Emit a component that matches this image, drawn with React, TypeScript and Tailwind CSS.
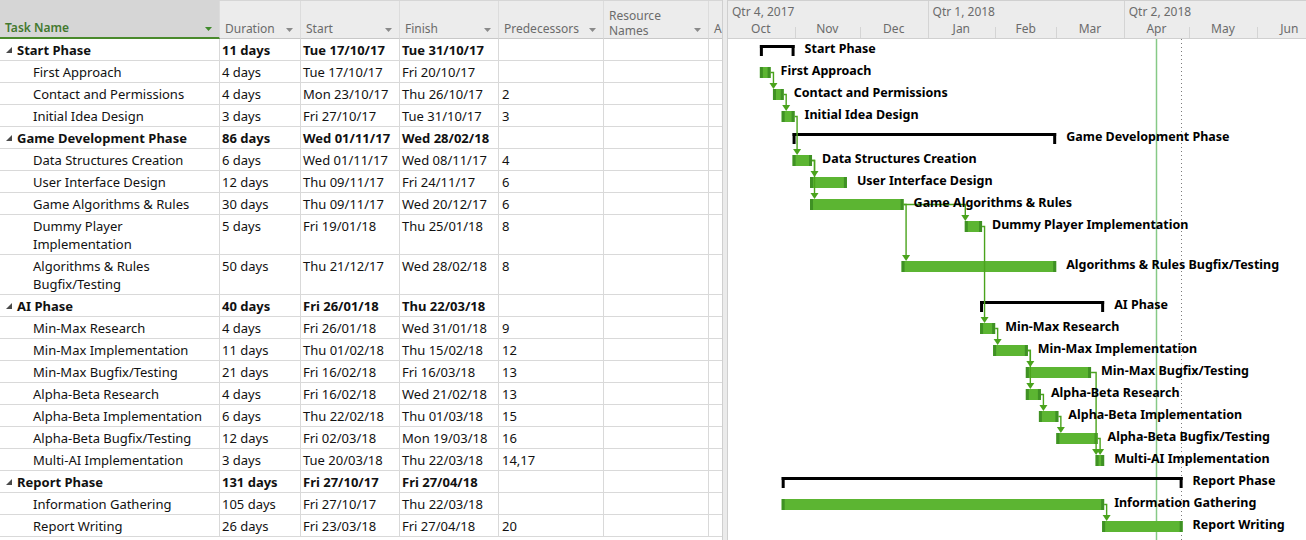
import React from 'react';

type Task = {
  name: string;
  dur: string;
  start: string;
  finish: string;
  pred: string;
  summary?: boolean;
  lines?: string[];
};

const tasks: Task[] = [
  { name: 'Start Phase', dur: '11 days', start: 'Tue 17/10/17', finish: 'Tue 31/10/17', pred: '', summary: true },
  { name: 'First Approach', dur: '4 days', start: 'Tue 17/10/17', finish: 'Fri 20/10/17', pred: '' },
  { name: 'Contact and Permissions', dur: '4 days', start: 'Mon 23/10/17', finish: 'Thu 26/10/17', pred: '2' },
  { name: 'Initial Idea Design', dur: '3 days', start: 'Fri 27/10/17', finish: 'Tue 31/10/17', pred: '3' },
  { name: 'Game Development Phase', dur: '86 days', start: 'Wed 01/11/17', finish: 'Wed 28/02/18', pred: '', summary: true },
  { name: 'Data Structures Creation', dur: '6 days', start: 'Wed 01/11/17', finish: 'Wed 08/11/17', pred: '4' },
  { name: 'User Interface Design', dur: '12 days', start: 'Thu 09/11/17', finish: 'Fri 24/11/17', pred: '6' },
  { name: 'Game Algorithms & Rules', dur: '30 days', start: 'Thu 09/11/17', finish: 'Wed 20/12/17', pred: '6' },
  { name: 'Dummy Player Implementation', lines: ['Dummy Player', 'Implementation'], dur: '5 days', start: 'Fri 19/01/18', finish: 'Thu 25/01/18', pred: '8' },
  { name: 'Algorithms & Rules Bugfix/Testing', lines: ['Algorithms & Rules', 'Bugfix/Testing'], dur: '50 days', start: 'Thu 21/12/17', finish: 'Wed 28/02/18', pred: '8' },
  { name: 'AI Phase', dur: '40 days', start: 'Fri 26/01/18', finish: 'Thu 22/03/18', pred: '', summary: true },
  { name: 'Min-Max Research', dur: '4 days', start: 'Fri 26/01/18', finish: 'Wed 31/01/18', pred: '9' },
  { name: 'Min-Max Implementation', dur: '11 days', start: 'Thu 01/02/18', finish: 'Thu 15/02/18', pred: '12' },
  { name: 'Min-Max Bugfix/Testing', dur: '21 days', start: 'Fri 16/02/18', finish: 'Fri 16/03/18', pred: '13' },
  { name: 'Alpha-Beta Research', dur: '4 days', start: 'Fri 16/02/18', finish: 'Wed 21/02/18', pred: '13' },
  { name: 'Alpha-Beta Implementation', dur: '6 days', start: 'Thu 22/02/18', finish: 'Thu 01/03/18', pred: '15' },
  { name: 'Alpha-Beta Bugfix/Testing', dur: '12 days', start: 'Fri 02/03/18', finish: 'Mon 19/03/18', pred: '16' },
  { name: 'Multi-AI Implementation', dur: '3 days', start: 'Tue 20/03/18', finish: 'Thu 22/03/18', pred: '14,17' },
  { name: 'Report Phase', dur: '131 days', start: 'Fri 27/10/17', finish: 'Fri 27/04/18', pred: '', summary: true },
  { name: 'Information Gathering', dur: '105 days', start: 'Fri 27/10/17', finish: 'Thu 22/03/18', pred: '' },
  { name: 'Report Writing', dur: '26 days', start: 'Fri 23/03/18', finish: 'Fri 27/04/18', pred: '20' },
];

// timescale: Oct 1 2017 sits one pixel left of the chart's edge
const PX = 2.18;
const X0 = -1;
const dayOf = (s: string) => {
  const [dd, mm, yy] = s.split(' ')[1].split('/').map(Number);
  return (Date.UTC(2000 + yy, mm - 1, dd) - Date.UTC(2017, 9, 1)) / 86400000;
};
const xAt = (d: number) => X0 + d * PX;

const rowH = tasks.map((t) => (t.lines ? 40 : 22));
const rowTop = rowH.map((_, i) => rowH.slice(0, i).reduce((a, b) => a + b, 0));

const bars = tasks.map((t, i) => {
  const x1 = xAt(dayOf(t.start)) - 2;
  const x2 = xAt(dayOf(t.finish) + 1);
  return { x1, x2, top: rowTop[i] + 6, mid: rowTop[i] + 11.5 };
});

const cols = [
  { key: 'name', label: 'Task Name', w: 'w-[220px]' },
  { key: 'dur', label: 'Duration', w: 'w-[81px]' },
  { key: 'start', label: 'Start', w: 'w-[99px]' },
  { key: 'finish', label: 'Finish', w: 'w-[99px]' },
  { key: 'pred', label: 'Predecessors', w: 'w-[105px]' },
  { key: 'res', label: 'Resource Names', w: 'w-[105px]' },
];

const Caret = ({ green }: { green?: boolean }) => (
  <svg width="7" height="4" viewBox="0 0 7 4" className="mb-[6px] shrink-0">
    <polygon points="0,0 7,0 3.5,4" fill={green ? '#3f8a2b' : '#8a8a8a'} />
  </svg>
);

const TableHeader = () => (
  <div className="flex h-[39px] border-t border-[#d6d6d6] text-[12px] text-[#6b6b6b]">
    {cols.map((c) => (
      <div
        key={c.key}
        className={`${c.w} flex shrink-0 items-end justify-between border-r border-[#dcdcdc] pl-[5px] pr-[7px] ${
          c.key === 'name'
            ? 'border-b-2 border-b-[#4a8a2c] bg-[#d6d6d6] font-semibold text-[#43792f]'
            : 'border-b border-b-[#c8c8c8] bg-[#ececec]'
        }`}
      >
        {c.key === 'res' ? (
          <span className="leading-[15px]">
            Resource
            <br />
            Names
          </span>
        ) : (
          <span className="leading-[18px]">{c.label}</span>
        )}
        <Caret green={c.key === 'name'} />
      </div>
    ))}
    <div className="flex w-[13px] shrink-0 items-end overflow-hidden border-b border-b-[#c8c8c8] bg-[#ececec] pl-[5px]">
      <span className="leading-[18px]">A</span>
    </div>
  </div>
);

const SummaryToggle = () => (
  <svg width="6" height="6" viewBox="0 0 6 6" className="mr-[5px] ml-[6px] mt-[6px] shrink-0">
    <polygon points="6,0 6,6 0,6" fill="#4a4a4a" />
  </svg>
);

const TableRow = ({ t }: { t: Task }) => {
  const h = t.lines ? 'h-[40px]' : 'h-[22px]';
  const weight = t.summary ? 'font-bold' : '';
  const cell = 'shrink-0 border-r border-[#d9d9d9] pt-[2px] leading-[18px] pl-[2px] whitespace-nowrap overflow-hidden';
  return (
    <div className={`flex ${h} border-b border-[#d9d9d9] text-[13px] text-[#111]`}>
      <div className={`flex w-[220px] shrink-0 items-start border-r border-[#d9d9d9] pt-[2px] leading-[18px] ${weight}`}>
        {t.summary ? (
          <>
            <SummaryToggle />
            <span>{t.name}</span>
          </>
        ) : (
          <span className="pl-[33px]">
            {t.lines ? (
              <>
                {t.lines[0]}
                <br />
                {t.lines[1]}
              </>
            ) : (
              t.name
            )}
          </span>
        )}
      </div>
      <div className={`w-[81px] ${cell} ${weight}`}>{t.dur}</div>
      <div className={`w-[99px] ${cell} ${weight}`}>{t.start}</div>
      <div className={`w-[99px] ${cell} ${weight}`}>{t.finish}</div>
      <div className={`w-[105px] ${cell} pl-[3px]`}>{t.pred}</div>
      <div className={`w-[105px] ${cell}`} />
      <div className="w-[13px] shrink-0" />
    </div>
  );
};

const months = [
  { m: 'Oct', d: 31, q: true },
  { m: 'Nov', d: 30 },
  { m: 'Dec', d: 31 },
  { m: 'Jan', d: 31, q: true },
  { m: 'Feb', d: 28 },
  { m: 'Mar', d: 31 },
  { m: 'Apr', d: 30, q: true },
  { m: 'May', d: 31 },
  { m: 'Jun', d: 30 },
];
const quarters = [
  { label: 'Qtr 4, 2017', d: 92 },
  { label: 'Qtr 1, 2018', d: 90 },
  { label: 'Qtr 2, 2018', d: 91 },
];

const Timescale = () => (
  <div className="h-[39px] overflow-hidden border-t border-b border-[#d0d0d0] bg-[#ececec] text-[12px] text-[#6b6b6b]">
    <div className="-ml-px flex h-[19px]">
      {quarters.map((q) => (
        <div
          key={q.label}
          className="shrink-0 border-l border-[#d4d4d4] pl-[4px] pt-[3px] leading-[16px] whitespace-nowrap"
          style={{ width: q.d * PX }}
        >
          {q.label}
        </div>
      ))}
    </div>
    <div className="-ml-px flex h-[19px]">
      {months.map((m) => (
        <div key={m.m} className="relative shrink-0 text-center leading-[18px]" style={{ width: m.d * PX }}>
          <span
            className={`absolute bottom-0 left-0 w-px bg-[#d4d4d4] ${m.q ? 'h-[19px]' : 'h-[12px]'}`}
          />
          {m.m}
        </div>
      ))}
    </div>
  </div>
);

const GREEN = '#5cb532';
const DARK = '#3f9124';
const LINK = '#4aa31c';

const ChartBody = () => {
  const links: React.ReactNode[] = [];
  tasks.forEach((t, i) => {
    if (!t.pred) return;
    t.pred.split(',').forEach((p) => {
      const a = bars[Number(p) - 1];
      const b = bars[i];
      const vx = Math.max(a.x2 + 2.5, b.x1 + 0.5);
      const tip = b.top;
      links.push(
        <g key={`${p}-${i}`}>
          <path d={`M${a.x2},${a.mid} H${vx} V${tip - 5}`} stroke={LINK} strokeWidth={1.4} fill="none" />
          <polygon points={`${vx - 4},${tip - 6} ${vx + 4},${tip - 6} ${vx},${tip}`} fill={LINK} />
        </g>
      );
    });
  });

  return (
    <svg width="578" height="501" className="block" fontFamily="'Noto Sans', sans-serif">
      <line x1={428.5} y1={0} x2={428.5} y2={501} stroke="#86c986" strokeWidth={1.5} />
      <line x1={453.5} y1={0} x2={453.5} y2={501} stroke="#7a7a7a" strokeWidth={1} strokeDasharray="1 3" />
      {tasks.map((t, i) => {
        const b = bars[i];
        if (t.summary) {
          return (
            <g key={i} fill="#000">
              <rect x={b.x1} y={b.top} width={b.x2 - b.x1} height={3} />
              <rect x={b.x1} y={b.top} width={3} height={11} />
              <rect x={b.x2 - 3} y={b.top} width={3} height={11} />
            </g>
          );
        }
        return (
          <g key={i}>
            <rect x={b.x1} y={b.top} width={b.x2 - b.x1} height={11} fill={GREEN} />
            <rect x={b.x1} y={b.top} width={3} height={11} fill={DARK} />
            <rect x={b.x2 - 3} y={b.top} width={3} height={11} fill={DARK} />
          </g>
        );
      })}
      {links}
      {tasks.map((t, i) => (
        <text
          key={i}
          x={bars[i].x2 + 10}
          y={rowTop[i] + 10.5}
          dominantBaseline="middle"
          fontSize={12.5}
          fontWeight={700}
          fill="#000"
        >
          {t.name}
        </text>
      ))}
    </svg>
  );
};

export default function App() {
  return (
    <div className="flex h-[540px] w-[1306px] overflow-hidden bg-white font-['Noto_Sans',sans-serif]">
      <div className="w-[722px] shrink-0">
        <TableHeader />
        {tasks.map((t, i) => (
          <TableRow key={i} t={t} />
        ))}
      </div>
      <div className="w-[6px] shrink-0 border-x border-[#cfcfcf] bg-[#ebebeb]" />
      <div className="w-[578px] shrink-0">
        <Timescale />
        <ChartBody />
      </div>
    </div>
  );
}
